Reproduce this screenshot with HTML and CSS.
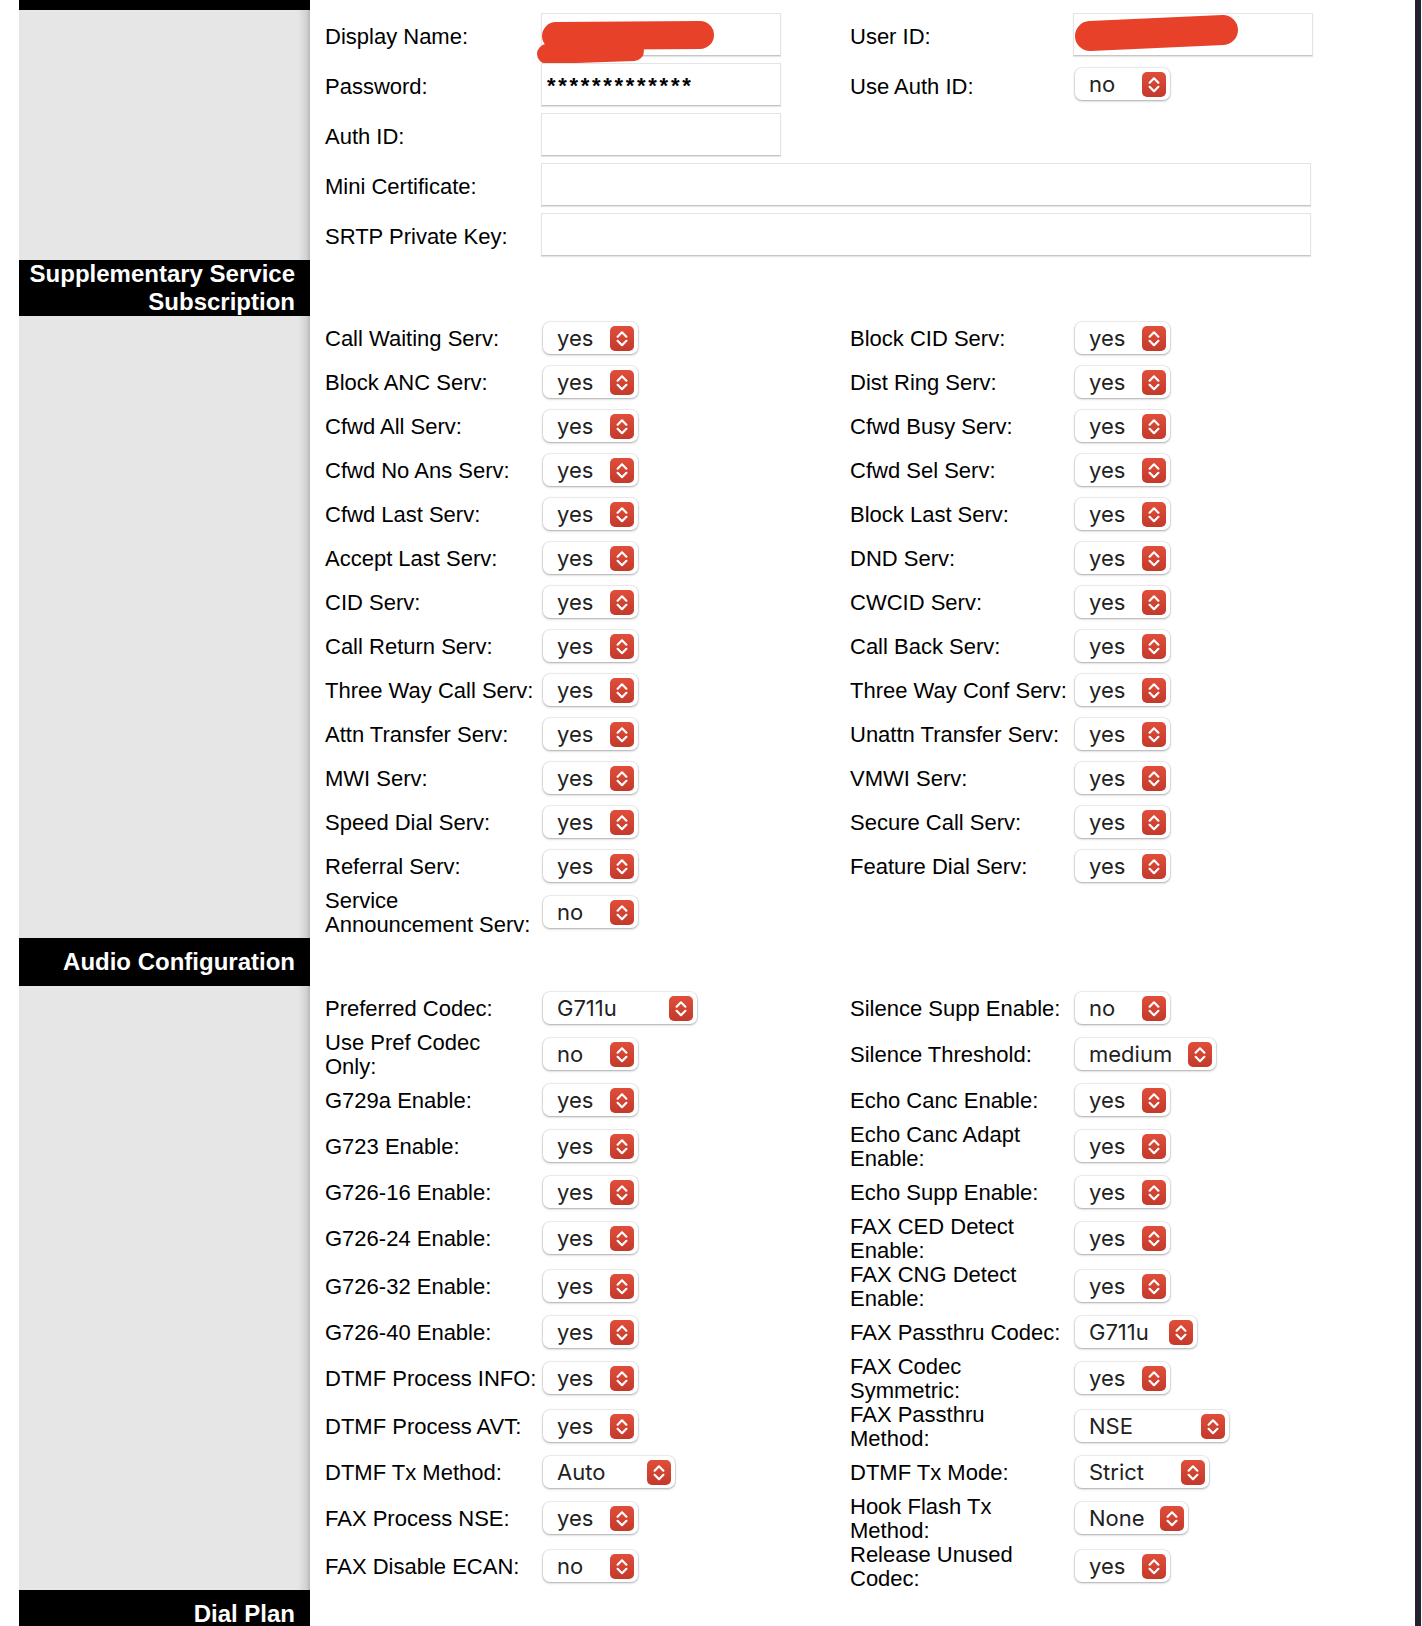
FILE: index.html
```html
<!DOCTYPE html>
<html lang="en">
<head>
  <meta charset="UTF-8" />
  <title>Line 1</title>
  <link rel="stylesheet" href="styles.css">
</head>
<body>

<svg class="defs" width="0" height="0">
  <symbol id="chev" viewBox="0 0 24 24">
    <path d="M7.6 10.2 L12 5.8 L16.4 10.2 M7.6 14.3 L12 18.7 L16.4 14.3" fill="none" stroke="#fff" stroke-width="2.2" stroke-linecap="round" stroke-linejoin="round"/>
  </symbol>
</svg>

<div class="window">
  <div class="cfg">

    <!-- account -->
    <div class="side first"></div>
    <div class="main">
      <div class="form top">
        <div class="row">
          <div class="lbl">Display Name:</div>
          <div class="fld">
            <div class="txt">
              <svg class="redact" width="240" height="43">
                <path d="M14 22 L158 21" stroke="#e8412a" stroke-width="28" stroke-linecap="round" fill="none"/>
                <path d="M5 40 L92 37" stroke="#e8412a" stroke-width="20" stroke-linecap="round" fill="none"/>
              </svg>
            </div>
          </div>
          <div class="lbl">User ID:</div>
          <div class="fld">
            <div class="txt">
              <svg class="redact" width="240" height="43">
                <path d="M16 22 L149 16" stroke="#e8412a" stroke-width="30" stroke-linecap="round" fill="none"/>
              </svg>
            </div>
          </div>
        </div>
        <div class="row">
          <div class="lbl">Password:</div>
          <div class="fld"><div class="txt pw">*************</div></div>
          <div class="lbl">Use Auth ID:</div>
          <div class="fld"><div class="sel"><span>no</span><span class="step"><svg><use href="#chev"/></svg></span></div></div>
        </div>
        <div class="row">
          <div class="lbl">Auth ID:</div>
          <div class="fld"><div class="txt"></div></div>
        </div>
        <div class="row">
          <div class="lbl">Mini Certificate:</div>
          <div class="fld span3"><div class="txt wide"></div></div>
        </div>
        <div class="row">
          <div class="lbl">SRTP Private Key:</div>
          <div class="fld span3"><div class="txt wide"></div></div>
        </div>
      </div>
    </div>

    <div class="side hd">Supplementary Service<br>Subscription</div>
    <div class="main"></div>

    <!-- supplementary services -->
    <div class="side"></div>
    <div class="main">
      <div class="form sss">
        <div class="row">
          <div class="lbl">Call Waiting Serv:</div>
          <div class="fld"><div class="sel"><span>yes</span><span class="step"><svg><use href="#chev"/></svg></span></div></div>
          <div class="lbl">Block CID Serv:</div>
          <div class="fld"><div class="sel"><span>yes</span><span class="step"><svg><use href="#chev"/></svg></span></div></div>
        </div>
        <div class="row">
          <div class="lbl">Block ANC Serv:</div>
          <div class="fld"><div class="sel"><span>yes</span><span class="step"><svg><use href="#chev"/></svg></span></div></div>
          <div class="lbl">Dist Ring Serv:</div>
          <div class="fld"><div class="sel"><span>yes</span><span class="step"><svg><use href="#chev"/></svg></span></div></div>
        </div>
        <div class="row">
          <div class="lbl">Cfwd All Serv:</div>
          <div class="fld"><div class="sel"><span>yes</span><span class="step"><svg><use href="#chev"/></svg></span></div></div>
          <div class="lbl">Cfwd Busy Serv:</div>
          <div class="fld"><div class="sel"><span>yes</span><span class="step"><svg><use href="#chev"/></svg></span></div></div>
        </div>
        <div class="row">
          <div class="lbl">Cfwd No Ans Serv:</div>
          <div class="fld"><div class="sel"><span>yes</span><span class="step"><svg><use href="#chev"/></svg></span></div></div>
          <div class="lbl">Cfwd Sel Serv:</div>
          <div class="fld"><div class="sel"><span>yes</span><span class="step"><svg><use href="#chev"/></svg></span></div></div>
        </div>
        <div class="row">
          <div class="lbl">Cfwd Last Serv:</div>
          <div class="fld"><div class="sel"><span>yes</span><span class="step"><svg><use href="#chev"/></svg></span></div></div>
          <div class="lbl">Block Last Serv:</div>
          <div class="fld"><div class="sel"><span>yes</span><span class="step"><svg><use href="#chev"/></svg></span></div></div>
        </div>
        <div class="row">
          <div class="lbl">Accept Last Serv:</div>
          <div class="fld"><div class="sel"><span>yes</span><span class="step"><svg><use href="#chev"/></svg></span></div></div>
          <div class="lbl">DND Serv:</div>
          <div class="fld"><div class="sel"><span>yes</span><span class="step"><svg><use href="#chev"/></svg></span></div></div>
        </div>
        <div class="row">
          <div class="lbl">CID Serv:</div>
          <div class="fld"><div class="sel"><span>yes</span><span class="step"><svg><use href="#chev"/></svg></span></div></div>
          <div class="lbl">CWCID Serv:</div>
          <div class="fld"><div class="sel"><span>yes</span><span class="step"><svg><use href="#chev"/></svg></span></div></div>
        </div>
        <div class="row">
          <div class="lbl">Call Return Serv:</div>
          <div class="fld"><div class="sel"><span>yes</span><span class="step"><svg><use href="#chev"/></svg></span></div></div>
          <div class="lbl">Call Back Serv:</div>
          <div class="fld"><div class="sel"><span>yes</span><span class="step"><svg><use href="#chev"/></svg></span></div></div>
        </div>
        <div class="row">
          <div class="lbl">Three Way Call Serv:</div>
          <div class="fld"><div class="sel"><span>yes</span><span class="step"><svg><use href="#chev"/></svg></span></div></div>
          <div class="lbl">Three Way Conf Serv:</div>
          <div class="fld"><div class="sel"><span>yes</span><span class="step"><svg><use href="#chev"/></svg></span></div></div>
        </div>
        <div class="row">
          <div class="lbl">Attn Transfer Serv:</div>
          <div class="fld"><div class="sel"><span>yes</span><span class="step"><svg><use href="#chev"/></svg></span></div></div>
          <div class="lbl">Unattn Transfer Serv:</div>
          <div class="fld"><div class="sel"><span>yes</span><span class="step"><svg><use href="#chev"/></svg></span></div></div>
        </div>
        <div class="row">
          <div class="lbl">MWI Serv:</div>
          <div class="fld"><div class="sel"><span>yes</span><span class="step"><svg><use href="#chev"/></svg></span></div></div>
          <div class="lbl">VMWI Serv:</div>
          <div class="fld"><div class="sel"><span>yes</span><span class="step"><svg><use href="#chev"/></svg></span></div></div>
        </div>
        <div class="row">
          <div class="lbl">Speed Dial Serv:</div>
          <div class="fld"><div class="sel"><span>yes</span><span class="step"><svg><use href="#chev"/></svg></span></div></div>
          <div class="lbl">Secure Call Serv:</div>
          <div class="fld"><div class="sel"><span>yes</span><span class="step"><svg><use href="#chev"/></svg></span></div></div>
        </div>
        <div class="row">
          <div class="lbl">Referral Serv:</div>
          <div class="fld"><div class="sel"><span>yes</span><span class="step"><svg><use href="#chev"/></svg></span></div></div>
          <div class="lbl">Feature Dial Serv:</div>
          <div class="fld"><div class="sel"><span>yes</span><span class="step"><svg><use href="#chev"/></svg></span></div></div>
        </div>
        <div class="row">
          <div class="lbl">Service<br>Announcement Serv:</div>
          <div class="fld"><div class="sel"><span>no</span><span class="step"><svg><use href="#chev"/></svg></span></div></div>
        </div>
      </div>
    </div>

    <div class="side hd">Audio Configuration</div>
    <div class="main"></div>

    <!-- audio -->
    <div class="side"></div>
    <div class="main">
      <div class="form audio">
        <div class="row">
          <div class="lbl">Preferred Codec:</div>
          <div class="fld"><div class="sel w-codec"><span>G711u</span><span class="step"><svg><use href="#chev"/></svg></span></div></div>
          <div class="lbl">Silence Supp Enable:</div>
          <div class="fld"><div class="sel"><span>no</span><span class="step"><svg><use href="#chev"/></svg></span></div></div>
        </div>
        <div class="row">
          <div class="lbl">Use Pref Codec<br>Only:</div>
          <div class="fld"><div class="sel"><span>no</span><span class="step"><svg><use href="#chev"/></svg></span></div></div>
          <div class="lbl">Silence Threshold:</div>
          <div class="fld"><div class="sel w-med"><span>medium</span><span class="step"><svg><use href="#chev"/></svg></span></div></div>
        </div>
        <div class="row">
          <div class="lbl">G729a Enable:</div>
          <div class="fld"><div class="sel"><span>yes</span><span class="step"><svg><use href="#chev"/></svg></span></div></div>
          <div class="lbl">Echo Canc Enable:</div>
          <div class="fld"><div class="sel"><span>yes</span><span class="step"><svg><use href="#chev"/></svg></span></div></div>
        </div>
        <div class="row">
          <div class="lbl">G723 Enable:</div>
          <div class="fld"><div class="sel"><span>yes</span><span class="step"><svg><use href="#chev"/></svg></span></div></div>
          <div class="lbl">Echo Canc Adapt<br>Enable:</div>
          <div class="fld"><div class="sel"><span>yes</span><span class="step"><svg><use href="#chev"/></svg></span></div></div>
        </div>
        <div class="row">
          <div class="lbl">G726-16 Enable:</div>
          <div class="fld"><div class="sel"><span>yes</span><span class="step"><svg><use href="#chev"/></svg></span></div></div>
          <div class="lbl">Echo Supp Enable:</div>
          <div class="fld"><div class="sel"><span>yes</span><span class="step"><svg><use href="#chev"/></svg></span></div></div>
        </div>
        <div class="row">
          <div class="lbl">G726-24 Enable:</div>
          <div class="fld"><div class="sel"><span>yes</span><span class="step"><svg><use href="#chev"/></svg></span></div></div>
          <div class="lbl">FAX CED Detect<br>Enable:</div>
          <div class="fld"><div class="sel"><span>yes</span><span class="step"><svg><use href="#chev"/></svg></span></div></div>
        </div>
        <div class="row">
          <div class="lbl">G726-32 Enable:</div>
          <div class="fld"><div class="sel"><span>yes</span><span class="step"><svg><use href="#chev"/></svg></span></div></div>
          <div class="lbl">FAX CNG Detect<br>Enable:</div>
          <div class="fld"><div class="sel"><span>yes</span><span class="step"><svg><use href="#chev"/></svg></span></div></div>
        </div>
        <div class="row">
          <div class="lbl">G726-40 Enable:</div>
          <div class="fld"><div class="sel"><span>yes</span><span class="step"><svg><use href="#chev"/></svg></span></div></div>
          <div class="lbl">FAX Passthru Codec:</div>
          <div class="fld"><div class="sel w-g711"><span>G711u</span><span class="step"><svg><use href="#chev"/></svg></span></div></div>
        </div>
        <div class="row">
          <div class="lbl">DTMF Process INFO:</div>
          <div class="fld"><div class="sel"><span>yes</span><span class="step"><svg><use href="#chev"/></svg></span></div></div>
          <div class="lbl">FAX Codec<br>Symmetric:</div>
          <div class="fld"><div class="sel"><span>yes</span><span class="step"><svg><use href="#chev"/></svg></span></div></div>
        </div>
        <div class="row">
          <div class="lbl">DTMF Process AVT:</div>
          <div class="fld"><div class="sel"><span>yes</span><span class="step"><svg><use href="#chev"/></svg></span></div></div>
          <div class="lbl">FAX Passthru<br>Method:</div>
          <div class="fld"><div class="sel w-nse"><span>NSE</span><span class="step"><svg><use href="#chev"/></svg></span></div></div>
        </div>
        <div class="row">
          <div class="lbl">DTMF Tx Method:</div>
          <div class="fld"><div class="sel w-auto"><span>Auto</span><span class="step"><svg><use href="#chev"/></svg></span></div></div>
          <div class="lbl">DTMF Tx Mode:</div>
          <div class="fld"><div class="sel w-strict"><span>Strict</span><span class="step"><svg><use href="#chev"/></svg></span></div></div>
        </div>
        <div class="row">
          <div class="lbl">FAX Process NSE:</div>
          <div class="fld"><div class="sel"><span>yes</span><span class="step"><svg><use href="#chev"/></svg></span></div></div>
          <div class="lbl">Hook Flash Tx<br>Method:</div>
          <div class="fld"><div class="sel w-none"><span>None</span><span class="step"><svg><use href="#chev"/></svg></span></div></div>
        </div>
        <div class="row">
          <div class="lbl">FAX Disable ECAN:</div>
          <div class="fld"><div class="sel"><span>no</span><span class="step"><svg><use href="#chev"/></svg></span></div></div>
          <div class="lbl">Release Unused<br>Codec:</div>
          <div class="fld"><div class="sel"><span>yes</span><span class="step"><svg><use href="#chev"/></svg></span></div></div>
        </div>
      </div>
    </div>

    <div class="side hd">Dial Plan</div>
    <div class="main"></div>

  </div>
  <div class="edge"></div>
</div>

</body>
</html>
```

FILE: styles.css
```css
html, body {
  height: 1626px;
  overflow: hidden;
}
body {
  margin: 0;
  font-family: "Liberation Sans", Arial, sans-serif;
  background: #fff;
  color: #000;
}
.defs {
  position: absolute;
}
.window {
  display: flex;
  width: 1402px;
  margin-left: 19px;
  min-height: 1626px;
}
.cfg {
  flex: 1;
  display: grid;
  grid-template-columns: 291px 1fr;
  align-content: start;
}
.edge {
  flex: none;
  width: 6px;
  background: #23232f;
}
.side {
  background: linear-gradient(to right, #e6e6e6 calc(100% - 12px), #d3d3d3 calc(100% - 4px), #b8b8b8);
}
.side.first {
  border-top: 10px solid #000;
}
.side.hd {
  background: #000;
  color: #fff;
  font-weight: bold;
  font-size: 24px;
  line-height: 28px;
  min-height: 48px;
  padding-right: 15px;
  display: flex;
  align-items: center;
  justify-content: flex-end;
  text-align: right;
}
.main {
  padding-left: 15px;
}
.form.top {
  padding: 9px 0 1px;
}
.form.sss {
  padding-bottom: 2px;
}
.row {
  display: grid;
  grid-template-columns: 216px 309px 223px 1fr;
  align-items: center;
  min-height: 44px;
}
.top .row {
  height: 50px;
}
.span3 {
  grid-column: 2 / 5;
}
.lbl {
  font-size: 22px;
  line-height: 24px;
  padding-top: 1px;
  margin-bottom: -1px;
  white-space: nowrap;
}
.top .lbl {
  padding-top: 3px;
  margin-bottom: -3px;
}
.txt {
  position: relative;
  width: 240px;
  height: 43px;
  box-sizing: border-box;
  background: #fff;
  border: 1px solid #e4e4e4;
  border-bottom-color: #c6c6c6;
  box-shadow: 0 1px 1px rgba(0,0,0,0.1);
}
.txt.wide {
  width: 770px;
}
.txt.pw {
  font-size: 22px;
  line-height: 24px;
  letter-spacing: 2.7px;
  padding: 10px 0 0 5px;
  font-weight: bold;
}
.redact {
  position: absolute;
  left: 0;
  top: 0;
  overflow: visible;
}
.sel {
  display: flex;
  align-items: center;
  justify-content: space-between;
  width: 95px;
  height: 32px;
  box-sizing: border-box;
  margin-left: 2px;
  padding: 0 4px 0 14px;
  border-radius: 7px;
  background: #fff;
  box-shadow: 0 0 0 1px rgba(0,0,0,0.06), 0 1px 2.5px rgba(0,0,0,0.3);
  font-family: Inter, "Liberation Sans", sans-serif;
  font-size: 22px;
  color: #222;
}
.sel .step {
  display: flex;
  flex: none;
  width: 24px;
  height: 25px;
  border-radius: 5px;
  background: linear-gradient(#e04e3a, #c3392b);
}
.sel svg {
  width: 24px;
  height: 25px;
}
.w-codec { width: 154px; }
.w-med { width: 141px; }
.w-g711 { width: 122px; }
.w-nse { width: 154px; }
.w-auto { width: 132px; }
.w-strict { width: 134px; }
.w-none { width: 113px; }
```
